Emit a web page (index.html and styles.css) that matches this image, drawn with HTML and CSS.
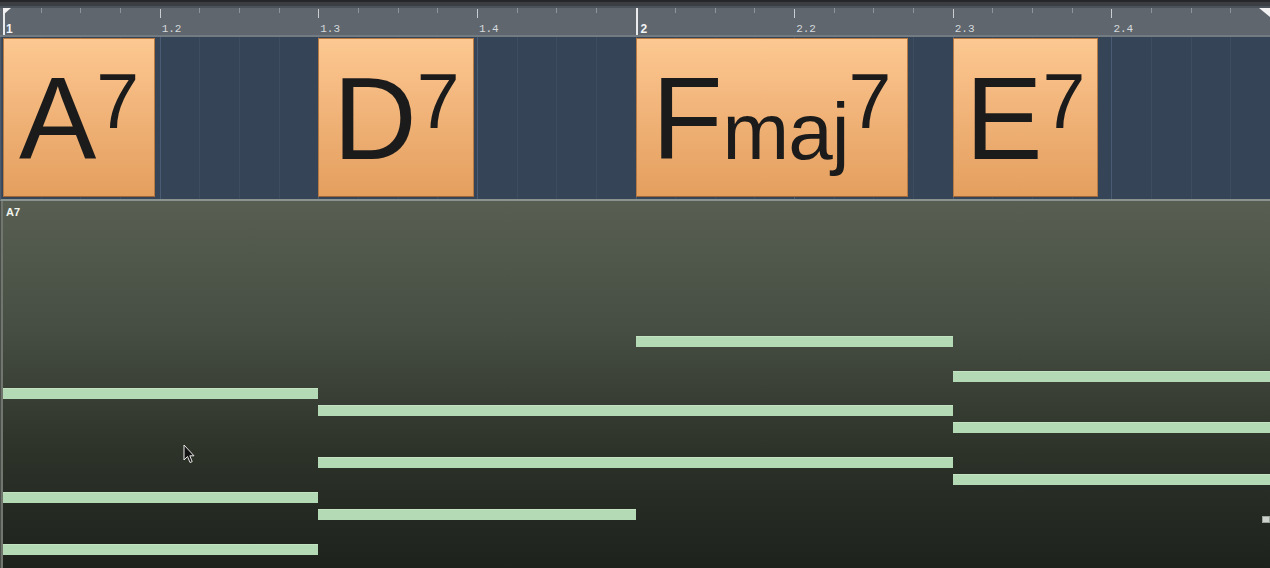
FILE: index.html
```html
<!DOCTYPE html>
<html lang="en">
<head>
<meta charset="utf-8">
<title>Chord Track</title>
<link rel="stylesheet" href="styles.css">
</head>
<body>
<div class="editor">
  <div class="topbar"></div>

  <div class="ruler">
    <svg class="locator locator-left" width="8" height="7" viewBox="0 0 8 7"><polygon points="0,0 8,0 0,7" fill="#f2f2f2"/></svg>
    <svg class="locator locator-right" width="11" height="9" viewBox="0 0 11 9"><polygon points="0,0 11,0 11,9" fill="#f2f2f2"/></svg>
    <div class="ticks">
      <span class="tick bar"><b>1</b></span><span class="tick"></span><span class="tick"></span><span class="tick"></span>
      <span class="tick beat"><i>1.2</i></span><span class="tick"></span><span class="tick"></span><span class="tick"></span>
      <span class="tick beat"><i>1.3</i></span><span class="tick"></span><span class="tick"></span><span class="tick"></span>
      <span class="tick beat"><i>1.4</i></span><span class="tick"></span><span class="tick"></span><span class="tick"></span>
      <span class="tick bar"><b>2</b></span><span class="tick"></span><span class="tick"></span><span class="tick"></span>
      <span class="tick beat"><i>2.2</i></span><span class="tick"></span><span class="tick"></span><span class="tick"></span>
      <span class="tick beat"><i>2.3</i></span><span class="tick"></span><span class="tick"></span><span class="tick"></span>
      <span class="tick beat"><i>2.4</i></span><span class="tick"></span><span class="tick"></span><span class="tick"></span>
    </div>
  </div>

  <div class="chord-track">
    <div class="lines">
      <span class="line"></span><span class="line"></span><span class="line"></span><span class="line"></span>
      <span class="line beat"></span><span class="line"></span><span class="line"></span><span class="line"></span>
      <span class="line beat"></span><span class="line"></span><span class="line"></span><span class="line"></span>
      <span class="line beat"></span><span class="line"></span><span class="line"></span><span class="line"></span>
      <span class="line beat"></span><span class="line"></span><span class="line"></span><span class="line"></span>
      <span class="line beat"></span><span class="line"></span><span class="line"></span><span class="line"></span>
      <span class="line beat"></span><span class="line"></span><span class="line"></span><span class="line"></span>
      <span class="line beat"></span><span class="line"></span><span class="line"></span><span class="line"></span>
    </div>
    <div class="chords">
      <div class="chord chord-first" style="grid-column: 1 / span 8; width: 152px;">
        <span class="root">A</span><span class="ext">7</span>
      </div>
      <div class="chord" style="grid-column: 9 / span 8; width: 156px;">
        <span class="root">D</span><span class="ext">7</span>
      </div>
      <div class="chord" style="grid-column: 17 / span 8; width: 272px;">
        <span class="root">F</span><span class="qual">maj</span><span class="ext">7</span>
      </div>
      <div class="chord" style="grid-column: 25 / span 8; width: 145px;">
        <span class="root">E</span><span class="ext">7</span>
      </div>
    </div>
  </div>

  <div class="roll">
    <span class="roll-label">A7</span>
    <div class="notes">
      <!-- A7: C#, G, E -->
      <span class="note" style="grid-column: 1 / 9; grid-row: 11;"></span>
      <span class="note" style="grid-column: 1 / 9; grid-row: 17;"></span>
      <span class="note" style="grid-column: 1 / 9; grid-row: 20;"></span>
      <!-- D7 into Fmaj7: C and A held, F# -->
      <span class="note" style="grid-column: 9 / 25; grid-row: 12;"></span>
      <span class="note" style="grid-column: 9 / 25; grid-row: 15;"></span>
      <span class="note" style="grid-column: 9 / 17; grid-row: 18;"></span>
      <!-- Fmaj7: E -->
      <span class="note" style="grid-column: 17 / 25; grid-row: 8;"></span>
      <!-- E7: D, B, G# -->
      <span class="note" style="grid-column: 25 / 33; grid-row: 10;"></span>
      <span class="note" style="grid-column: 25 / 33; grid-row: 13;"></span>
      <span class="note" style="grid-column: 25 / 33; grid-row: 16;"></span>
    </div>
    <span class="scroll-marker"></span>
    <svg class="pointer" width="12" height="21" viewBox="0 0 12 21">
      <path d="M1 1 L1 16 L4.5 12.5 L7 18.5 L9.2 17.6 L6.8 11.8 L11 11.8 Z" fill="#111" stroke="#e8e8e8" stroke-width="1" stroke-linejoin="miter"/>
    </svg>
  </div>
</div>
</body>
</html>
```

FILE: styles.css
```css
* {
  box-sizing: border-box;
}

html, body {
  margin: 0;
  padding: 0;
  background: #24272b;
  overflow: hidden;
}

.editor {
  width: 1270px;
  height: 568px;
  display: flex;
  flex-direction: column;
  font-family: "Liberation Sans", Arial, sans-serif;
}

/* window chrome strip above the ruler */
.topbar {
  height: 8px;
  flex: none;
  background: linear-gradient(#25272a 0 2px, #3b3f44 2px 6px, #4c5259 6px);
}

/* ---------- time ruler ---------- */
.ruler {
  position: relative;
  height: 29px;
  flex: none;
  padding-left: 1px;
  background: #5f666e;
  border-bottom: 2px solid #727a82;
}

.locator {
  position: absolute;
  top: 0;
  display: block;
}

.locator-left {
  left: 3px;
}

.locator-right {
  right: 0;
}

.ticks {
  display: flex;
  height: 27px;
}

.tick {
  flex: 1 1 0;
  min-width: 0;
  background: linear-gradient(#8d949b, #8d949b) no-repeat 0 0 / 1px 5px;
}

.tick.beat {
  background: linear-gradient(#c9cdd1, #c9cdd1) no-repeat 0 1px / 1px 9px;
}

.tick.bar {
  background: linear-gradient(#e9ebed, #e9ebed) no-repeat 0 0 / 2px 27px;
}

.tick.bar:first-child {
  background-position: 2px 0;
}

.tick b {
  display: block;
  padding: 14px 0 0 5px;
  font-size: 12px;
  line-height: 14px;
  font-weight: bold;
  color: #f4f5f6;
}

.tick i {
  display: block;
  padding: 15px 0 0 2px;
  font-style: normal;
  font-family: "Liberation Mono", "DejaVu Sans Mono", monospace;
  font-size: 11px;
  line-height: 13px;
  letter-spacing: 0;
  color: #d6dadd;
}

/* ---------- chord track ---------- */
.chord-track {
  display: grid;
  height: 164px;
  flex: none;
  background: #364457;
  border-left: 1px solid #4c5a6b;
  border-bottom: 2px solid #8a948f;
}

.lines,
.chords {
  grid-area: 1 / 1;
}

.lines {
  display: flex;
}

.line {
  flex: 1 1 0;
  min-width: 0;
  border-left: 1px solid #3e4c60;
}

.line.beat {
  border-left-color: #4a5c73;
}

.chords {
  display: grid;
  grid-template-columns: repeat(32, 1fr);
  grid-template-rows: 162px;
}

.chord {
  grid-row: 1;
  justify-self: start;
  align-self: start;
  margin-top: 1px;
  height: 159px;
  display: flex;
  justify-content: center;
  align-items: baseline;
  padding-top: 22px;
  background: linear-gradient(#fdc892, #f0b277 50%, #e49f5e);
  border: 1px solid #b67a44;
  border-bottom-color: #9e6636;
  color: #1b1b1b;
  overflow: hidden;
}

.chord-first {
  margin-left: 2px;
}

.root {
  font-size: 116px;
  line-height: 1;
}

.qual {
  font-size: 80px;
  line-height: 1;
  letter-spacing: -1px;
}

.ext {
  align-self: flex-start;
  font-size: 77px;
  line-height: 1;
  margin-top: 2px;
}

/* ---------- note lane ---------- */
.roll {
  position: relative;
  flex: 1 1 auto;
  border-left: 1px solid #4a4f49;
  box-shadow: inset 2px 0 0 #71776f;
  background: linear-gradient(#585f52, #464d42 35%, #2d3329 68%, #1d221d);
  overflow: hidden;
}

.roll-label {
  position: absolute;
  top: 5px;
  left: 5px;
  font-size: 11px;
  line-height: 12px;
  font-weight: bold;
  color: #f2f4f0;
}

.notes {
  display: grid;
  grid-template-columns: repeat(32, 1fr);
  grid-template-rows: repeat(20, 17.3px);
  padding-top: 10.75px;
}

.note {
  align-self: center;
  height: 11px;
  background: #b4dab5;
  border-top: 1px solid #c3e3c3;
}

.note:nth-child(-n+3) {
  margin-left: 2px;
}

.scroll-marker {
  position: absolute;
  right: 0;
  top: 315px;
  width: 8px;
  height: 7px;
  background: #cdd3cc;
  border: 1px solid #9aa39a;
}

.pointer {
  position: absolute;
  left: 182px;
  top: 243px;
  display: block;
}
```
